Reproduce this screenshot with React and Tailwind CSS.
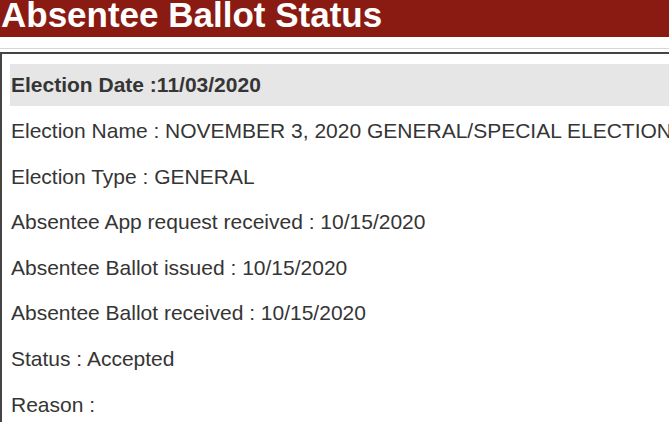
const ROWS = [
  'Election Name : NOVEMBER 3, 2020 GENERAL/SPECIAL ELECTION',
  'Election Type : GENERAL',
  'Absentee App request received : 10/15/2020',
  'Absentee Ballot issued : 10/15/2020',
  'Absentee Ballot received : 10/15/2020',
  'Status : Accepted',
  'Reason :',
];

export default function App() {
  return (
    <div className="h-[422px] w-[669px] overflow-hidden bg-white font-['Liberation_Sans',Arial,sans-serif] text-[#353535]">
      <header className="h-[37px] overflow-hidden bg-[#8a1b13]">
        <h1 className="-mt-[3px] pl-[1px] text-[35px] font-bold leading-[35px] whitespace-nowrap text-white">
          Absentee Ballot Status
        </h1>
      </header>

      <div className="mt-[11px] h-px bg-[#d6d6d6]" />

      <section className="mt-[3px] border-l-2 border-t-2 border-[#444] pl-[8px] pt-[10px]">
        <div className="flex h-[42px] items-center bg-[#e6e6e6] pl-[1px]">
          <span className="text-[21px] font-bold whitespace-nowrap">Election Date :11/03/2020</span>
        </div>
        <div className="mt-[2px] flex flex-col">
          {ROWS.map((row) => (
            <div key={row} className="flex h-[45.6px] items-center pl-[1px]">
              <span className="text-[21px] whitespace-nowrap">{row}</span>
            </div>
          ))}
        </div>
      </section>
    </div>
  );
}
